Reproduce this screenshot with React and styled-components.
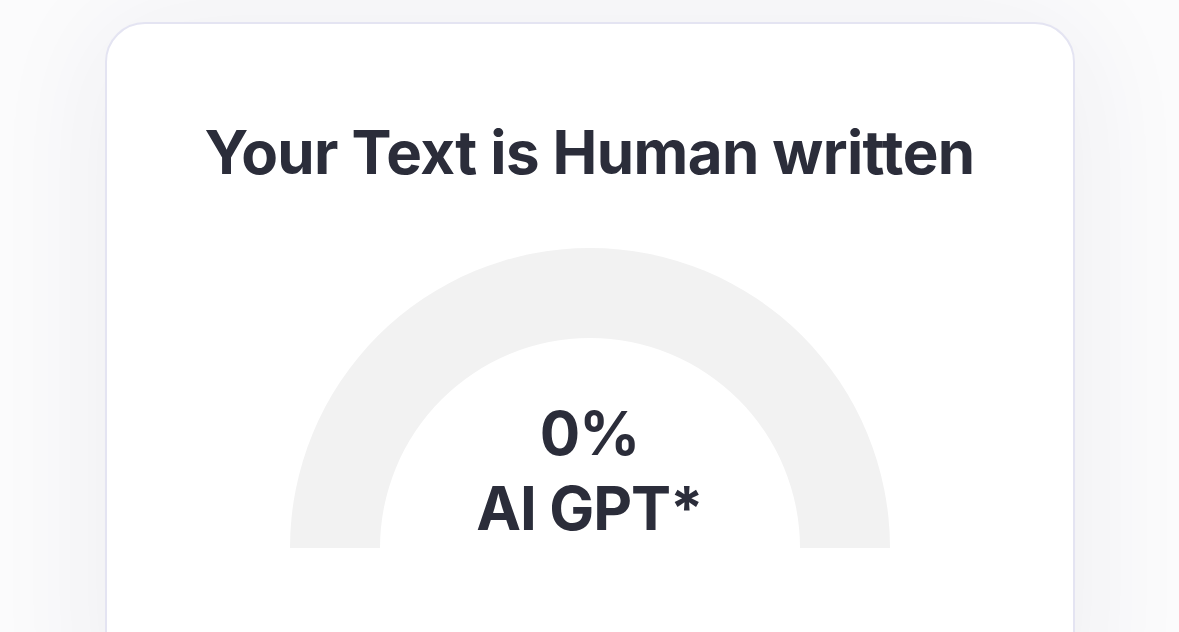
import React from "react";
import styled, { createGlobalStyle } from "styled-components";

const Global = createGlobalStyle`
  html, body { margin: 0; padding: 0; }
  body {
    background: #fbfbfc;
    font-family: Inter, "Noto Sans", "Liberation Sans", sans-serif;
    overflow: hidden;
  }
`;

const Page = styled.div`
  width: 1179px;
  height: 632px;
  display: flex;
  justify-content: center;
  padding-top: 22px;
  box-sizing: border-box;
  overflow: hidden;
`;

const Card = styled.section`
  width: 970px;
  height: 700px;
  box-sizing: border-box;
  background: #ffffff;
  border: 2px solid #e4e4f2;
  border-radius: 40px;
  box-shadow: 0 10px 120px rgba(40, 40, 90, 0.07);
  display: flex;
  flex-direction: column;
  align-items: center;
  padding-top: 92px;
  flex-shrink: 0;
`;

const Title = styled.h1`
  margin: 0;
  font-size: 60px;
  line-height: 72px;
  font-weight: 700;
  color: #2b2d3a;
  letter-spacing: -0.6px;
`;

const Gauge = styled.div`
  position: relative;
  width: 600px;
  height: 300px;
  margin-top: 60px;
`;

const Readout = styled.div`
  position: absolute;
  left: 0;
  right: 0;
  bottom: 2px;
  text-align: center;
  font-size: 60px;
  line-height: 75px;
  font-weight: 700;
  color: #2b2d3a;
  letter-spacing: -1px;
`;

export default function App() {
  return (
    <>
      <Global />
      <Page>
        <Card>
          <Title>Your Text is Human written</Title>
          <Gauge>
            <svg width="600" height="300" viewBox="0 0 600 300">
              <path
                d="M0 300 A300 300 0 0 1 600 300 L510 300 A210 210 0 0 0 90 300 Z"
                fill="#f2f2f2"
              />
            </svg>
            <Readout>
              <div>0%</div>
              <div>AI GPT*</div>
            </Readout>
          </Gauge>
        </Card>
      </Page>
    </>
  );
}
